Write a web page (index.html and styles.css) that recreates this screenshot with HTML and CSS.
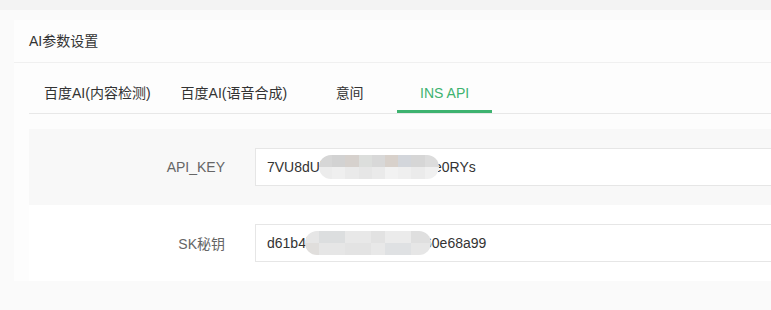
FILE: index.html
```html
<!DOCTYPE html>
<html lang="zh-CN">
<head>
    <meta charset="UTF-8">
    <meta name="viewport" content="width=device-width, initial-scale=1.0">
    <title>AI参数设置</title>
    <link rel="stylesheet" href="styles.css">
</head>
<body>
    <div class="topbar"></div>
    <div class="page">
        <div class="card">
            <div class="card-header">AI参数设置</div>
            <div class="card-body">
                <ul class="tab-title">
                    <li>百度AI(内容检测)</li>
                    <li>百度AI(语音合成)</li>
                    <li>意间</li>
                    <li class="tab-this">INS API</li>
                </ul>
                <div class="tab-content">
                    <!-- API key -->
                    <div class="form-row stripe">
                        <label class="form-label">API_KEY</label>
                        <div class="form-input">7VU8dUl<span class="blur blur-a"></span>e0RYs</div>
                    </div>
                    <!-- SK key -->
                    <div class="form-row">
                        <label class="form-label">SK秘钥</label>
                        <div class="form-input">d61b4l<span class="blur blur-b"></span>60e68a99</div>
                    </div>
                </div>
            </div>
        </div>
    </div>
</body>
</html>
```

FILE: styles.css
```css
* {
    box-sizing: border-box;
}

body {
    margin: 0;
    height: 310px;
    overflow: hidden;
    background-color: #fafafa;
    font-family: "Liberation Sans", "Noto Sans CJK SC", sans-serif;
    font-size: 14px;
    color: #333;
}

.topbar {
    height: 10px;
    background-color: #f3f3f3;
}

.page {
    padding: 10px 0 0 14px;
}

.card {
    width: 820px;
    background-color: #fdfdfd;
}

.card-header {
    height: 43px;
    line-height: 42px;
    padding-left: 15px;
    border-bottom: 1px solid #f0f0f0;
    color: #333;
}

.card-body {
    padding: 10px 0 0 15px;
}

.tab-title {
    display: flex;
    margin: 0;
    padding: 0;
    list-style: none;
    height: 41px;
    border-bottom: 1px solid #e8e8e8;
}

.tab-title li {
    min-width: 65px;
    padding: 0 15px;
    line-height: 40px;
    text-align: center;
    white-space: nowrap;
    color: #333;
}

.tab-title li:first-child {
    min-width: 136px;
}

.tab-title .tab-this {
    color: #3eb370;
    border-bottom: 3px solid #3eb370;
    min-width: 95px;
}

.tab-title li:nth-child(3) {
    min-width: 95px;
}

.tab-content {
    padding-top: 15px;
}

.form-row {
    display: flex;
    align-items: center;
    padding: 19px 0;
    background-color: #fff;
}

.form-row.stripe {
    background-color: #f8f8f8;
}

.form-label {
    width: 211px;
    padding-right: 15px;
    text-align: right;
    color: #666;
}

.form-input {
    flex: 1;
    margin-left: 15px;
    height: 38px;
    line-height: 36px;
    padding-left: 11px;
    background-color: #fff;
    border: 1px solid #e6e6e6;
    border-right: none;
    color: #333;
    white-space: nowrap;
    overflow: hidden;
}

.blur {
    position: relative;
    display: inline-block;
    vertical-align: middle;
    height: 24px;
    margin-top: -3px;
    border-radius: 12px;
    filter: blur(0.6px);
    background-repeat: no-repeat;
    background-size: 100% 50%;
    background-position: top, bottom;
}

.blur-a {
    width: 120px;
    margin-left: -4px;
    margin-right: -5px;
    background-image:
        linear-gradient(to right, #d6d6d6 0 13px, #d2d2d2 13px 26px, #d6d1cd 26px 40px, #dcdedc 40px 53px, #d8d8d8 53px 66px, #d8d1cb 66px 79px, #d3d6db 79px 92px, #d6d6d6 92px 106px, #dcdcdc 106px),
        linear-gradient(to right, #ececec 0 13px, #efefef 13px 26px, #eaeaea 26px 40px, #e6e6e6 40px 53px, #eaeaea 53px 66px, #f2f2f2 66px 79px, #efefef 79px 92px, #ebebeb 92px 106px, #f0f0f0 106px);
}

.blur-b {
    width: 126px;
    margin-left: -4px;
    margin-right: -7px;
    background-image:
        linear-gradient(to right, #e6e6e6 0 14px, #dcdedf 14px 40px, #e8e8e8 40px 66px, #e2e2e2 66px 80px, #ebebeb 80px 106px, #dfdfdf 106px),
        linear-gradient(to right, #e0dedc 0 14px, #e6e6e6 14px 40px, #e3e3e3 40px 66px, #e8e8e8 66px 80px, #dfe1e3 80px 106px, #e6e6e6 106px);
}
```
